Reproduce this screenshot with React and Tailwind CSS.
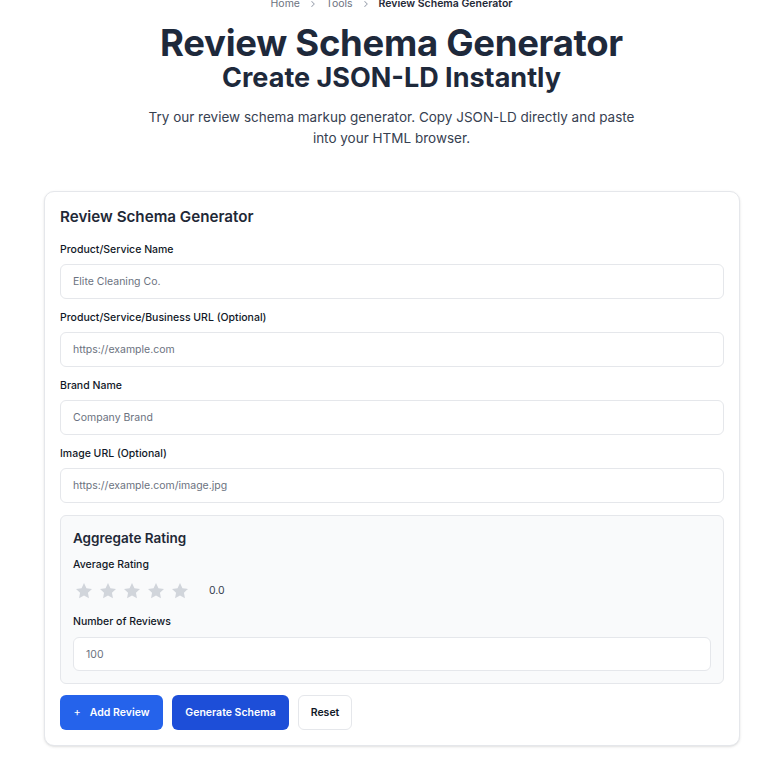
import React from "react";

function Star() {
  return (
    <svg viewBox="0 0 24 24" className="w-5 h-5" fill="#d1d5db">
      <path d="M12 2.5l2.94 6.1 6.66.9-4.86 4.62 1.2 6.6L12 17.5l-5.94 3.22 1.2-6.6L2.4 9.5l6.66-.9L12 2.5z" />
    </svg>
  );
}

function Chevron() {
  return (
    <svg viewBox="0 0 24 24" className="w-[10px] h-[10px]" fill="none" stroke="#9ca3af" strokeWidth="2.5" strokeLinecap="round" strokeLinejoin="round">
      <path d="M9 6l6 6-6 6" />
    </svg>
  );
}

function Field({ label, placeholder }) {
  return (
    <div className="flex flex-col">
      <label className="mb-[6px] text-[10.5px] font-medium leading-4 text-[#111827]">{label}</label>
      <input
        placeholder={placeholder}
        className="h-[35px] w-full rounded-md border border-[#e5e7eb] bg-white px-3 text-[10.5px] text-[#111827] placeholder:text-[#6b7280] outline-none"
      />
    </div>
  );
}

export default function App() {
  return (
    <div className="w-full overflow-hidden bg-white" style={{ fontFamily: "Inter, 'Noto Sans', sans-serif" }}>
      <div className="w-[783px]">
        <div className="mt-[-4px] flex items-center justify-center gap-[8px] text-[10.5px] leading-4 text-[#6b7280]">
          <span>Home</span>
          <Chevron />
          <span>Tools</span>
          <Chevron />
          <span className="font-semibold text-[#1f2937]">Review Schema Generator</span>
        </div>
        <h1 className="mt-[12px] text-center text-[36.5px] leading-[38px] font-bold tracking-[-0.3px] text-[#1e293b]">
          Review Schema Generator
        </h1>
        <h2 className="text-center text-[27px] leading-[32px] font-bold text-[#1e293b]">
          Create JSON-LD Instantly
        </h2>
        <p className="mx-auto mt-[13px] w-[500px] text-center text-[13.5px] leading-[21px] text-[#374151]">
          Try our review schema markup generator. Copy JSON-LD directly and paste into your HTML browser.
        </p>
        <div className="ml-[44px] mt-[42px] mb-6 w-[696px] rounded-[10px] border border-[#e5e7eb] bg-white px-[15px] pt-[13px] pb-[15px] shadow-sm">
          <h3 className="text-[15.2px] leading-6 font-semibold text-[#1f2937]">Review Schema Generator</h3>
          <div className="mt-[13px] flex flex-col gap-[11px]">
            <Field label="Product/Service Name" placeholder="Elite Cleaning Co." />
            <Field label="Product/Service/Business URL (Optional)" placeholder="https://example.com" />
            <Field label="Brand Name" placeholder="Company Brand" />
            <Field label="Image URL (Optional)" placeholder="https://example.com/image.jpg" />
          </div>
          <div className="mt-[12px] rounded-md border border-[#e5e7eb] bg-[#f9fafb] px-3 pt-[10px] pb-[12px]">
            <h4 className="text-[13.5px] leading-6 font-semibold text-[#1f2937]">Aggregate Rating</h4>
            <div className="mt-[7px] text-[10.5px] font-medium leading-4 text-[#111827]">Average Rating</div>
            <div className="mt-[8px] flex items-center">
              <div className="ml-[1px] flex gap-1">
                <Star /><Star /><Star /><Star /><Star />
              </div>
              <span className="ml-[19px] text-[10.5px] text-[#374151]">0.0</span>
            </div>
            <div className="mt-[13px] mb-[7px] text-[10.5px] font-medium leading-4 text-[#111827]">Number of Reviews</div>
            <input
              placeholder="100"
              className="h-[34px] w-full rounded-md border border-[#e5e7eb] bg-white px-3 text-[10.5px] placeholder:text-[#6b7280] outline-none"
            />
          </div>
          <div className="mt-[11px] flex gap-[9px]">
            <button className="flex h-[35px] w-[103px] items-center justify-center gap-[9px] rounded-md bg-[#2563eb] text-[10.5px] font-semibold text-white">
              <span className="text-[11px] font-normal">+</span>
              <span>Add Review</span>
            </button>
            <button className="h-[35px] w-[117px] rounded-md bg-[#1d4ed8] text-[10.5px] font-semibold text-white">
              Generate Schema
            </button>
            <button className="h-[35px] w-[54px] rounded-md border border-[#e5e7eb] bg-white text-[10.5px] font-semibold text-[#111827]">
              Reset
            </button>
          </div>
        </div>
      </div>
    </div>
  );
}
